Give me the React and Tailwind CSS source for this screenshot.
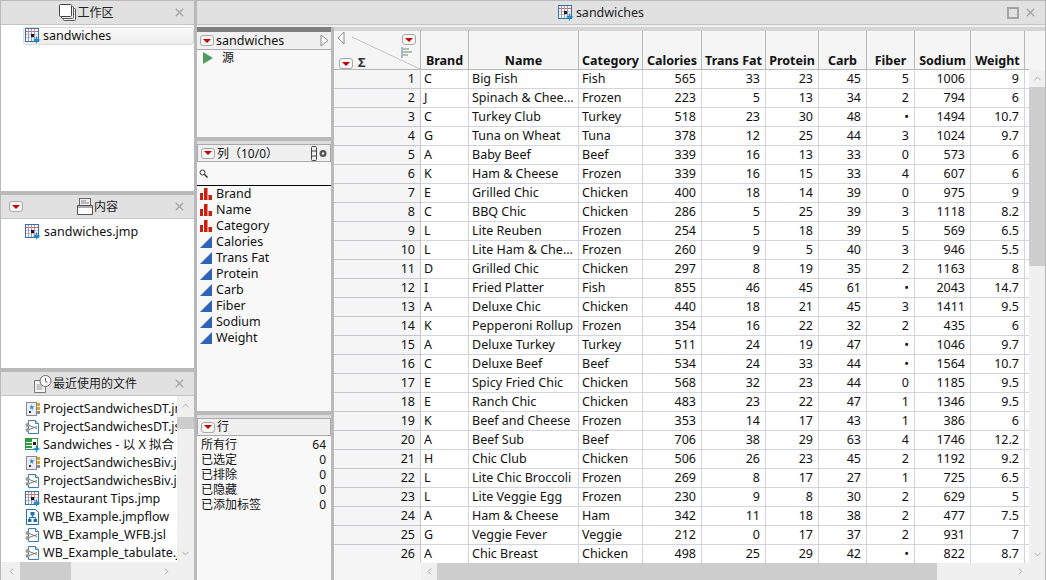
import { ChevronUp, ChevronDown, ChevronLeft, ChevronRight, X } from "lucide-react";

const columns = [
  { name: "Brand", width: 48 },
  { name: "Name", width: 110 },
  { name: "Category", width: 64 },
  { name: "Calories", width: 59 },
  { name: "Trans Fat", width: 64 },
  { name: "Protein", width: 53 },
  { name: "Carb", width: 48 },
  { name: "Fiber", width: 48 },
  { name: "Sodium", width: 56 },
  { name: "Weight", width: 54 },
];

const rows = [
  ["C", "Big Fish", "Fish", 565, 33, 23, 45, 5, 1006, 9],
  ["J", "Spinach & Chee...", "Frozen", 223, 5, 13, 34, 2, 794, 6],
  ["C", "Turkey Club", "Turkey", 518, 23, 30, 48, "•", 1494, 10.7],
  ["G", "Tuna on Wheat", "Tuna", 378, 12, 25, 44, 3, 1024, 9.7],
  ["A", "Baby Beef", "Beef", 339, 16, 13, 33, 0, 573, 6],
  ["K", "Ham & Cheese", "Frozen", 339, 16, 15, 33, 4, 607, 6],
  ["E", "Grilled Chic", "Chicken", 400, 18, 14, 39, 0, 975, 9],
  ["C", "BBQ Chic", "Chicken", 286, 5, 25, 39, 3, 1118, 8.2],
  ["L", "Lite Reuben", "Frozen", 254, 5, 18, 39, 5, 569, 6.5],
  ["L", "Lite Ham & Che...", "Frozen", 260, 9, 5, 40, 3, 946, 5.5],
  ["D", "Grilled Chic", "Chicken", 297, 8, 19, 35, 2, 1163, 8],
  ["I", "Fried Platter", "Fish", 855, 46, 45, 61, "•", 2043, 14.7],
  ["A", "Deluxe Chic", "Chicken", 440, 18, 21, 45, 3, 1411, 9.5],
  ["K", "Pepperoni Rollup", "Frozen", 354, 16, 22, 32, 2, 435, 6],
  ["A", "Deluxe Turkey", "Turkey", 511, 24, 19, 47, "•", 1046, 9.7],
  ["C", "Deluxe Beef", "Beef", 534, 24, 33, 44, "•", 1564, 10.7],
  ["E", "Spicy Fried Chic", "Chicken", 568, 32, 23, 44, 0, 1185, 9.5],
  ["E", "Ranch Chic", "Chicken", 483, 23, 22, 47, 1, 1346, 9.5],
  ["K", "Beef and Cheese", "Frozen", 353, 14, 17, 43, 1, 386, 6],
  ["A", "Beef Sub", "Beef", 706, 38, 29, 63, 4, 1746, 12.2],
  ["H", "Chic Club", "Chicken", 506, 26, 23, 45, 2, 1192, 9.2],
  ["L", "Lite Chic Broccoli", "Frozen", 269, 8, 17, 27, 1, 725, 6.5],
  ["L", "Lite Veggie Egg", "Frozen", 230, 9, 8, 30, 2, 629, 5],
  ["A", "Ham & Cheese", "Ham", 342, 11, 18, 38, 2, 477, 7.5],
  ["G", "Veggie Fever", "Veggie", 212, 0, 17, 37, 2, 931, 7],
  ["A", "Chic Breast", "Chicken", 498, 25, 29, 42, "•", 822, 8.7],
];

const recentFiles = [
  ["project", "ProjectSandwichesDT.jmpprj"],
  ["script", "ProjectSandwichesDT.jsl"],
  ["report", "Sandwiches - 以 X 拟合 Y"],
  ["project", "ProjectSandwichesBiv.jmpprj"],
  ["script", "ProjectSandwichesBiv.jsl"],
  ["table", "Restaurant Tips.jmp"],
  ["flow", "WB_Example.jmpflow"],
  ["script", "WB_Example_WFB.jsl"],
  ["script", "WB_Example_tabulate.jsl"],
];

const rowStates = [
  ["所有行", 64],
  ["已选定", 0],
  ["已排除", 0],
  ["已隐藏", 0],
  ["已添加标签", 0],
];

function Star() {
  return <path d="M11.500 7.500l1 3.500 3.500 1-3.500 1-1 3-1-3-3-1 3-1z" fill="#1688cc" />;
}

function TableIcon() {
  return (
    <svg width="16" height="16" viewBox="0 0 16 16" className="shrink-0">
      <rect x="0.500" y="0.500" width="13" height="13" fill="#fff" stroke="#2f74ae" />
      <path d="M1 3.500h12" stroke="#e2605c" />
      <path d="M1 6.500h12M1 9.500h12" stroke="#e6b4c0" />
      <path d="M3.500 1v12M6.500 1v12M9.500 1v12" stroke="#8f9ccb" />
      <rect x="6" y="6" width="3" height="3" fill="#1c1c1c" />
      <Star />
    </svg>
  );
}

function ScriptIcon() {
  return (
    <svg width="16" height="16" viewBox="0 0 16 16" className="shrink-0">
      <path d="M3.500 1.500h7l3 3v10h-10z" fill="#fff" stroke="#3a7db5" />
      <path d="M10.500 1.500v3h3" fill="#d4e6f5" stroke="#3a7db5" />
      <circle cx="2.500" cy="6" r="2" fill="#9a9a9a" />
      <circle cx="2.500" cy="11" r="2" fill="#9a9a9a" />
      <path d="M4 6.500l8 3M4 10.500l8-3" stroke="#777" />
    </svg>
  );
}

function ProjectIcon() {
  return (
    <svg width="16" height="16" viewBox="0 0 16 16" className="shrink-0">
      <rect x="1.500" y="1.500" width="10" height="13" fill="#ecebf7" stroke="#8a8a8a" />
      <rect x="12" y="2" width="3" height="3" fill="#e0a030" />
      <rect x="12" y="6" width="3" height="3" fill="#e0a030" />
      <rect x="12" y="10" width="3" height="3" fill="#8a8a8a" />
      <path d="M6.500 3l.7 2.300 2.300.3-1.800 1.100.3 2.300-1.500-1.600-1.800 1 1-2-1.300-1 2-.2z" fill="#1a8ac8" />
      <rect x="4" y="10" width="2" height="2" fill="#333" />
    </svg>
  );
}

function ReportIcon() {
  return (
    <svg width="16" height="16" viewBox="0 0 16 16" className="shrink-0">
      <rect x="0.500" y="1.500" width="12" height="11" fill="#fff" stroke="#2f9a3f" />
      <rect x="1" y="2" width="6" height="3" fill="#2f9a3f" />
      <rect x="1" y="6" width="6" height="2" fill="#2f9a3f" />
      <rect x="1" y="9" width="6" height="2" fill="#2f9a3f" />
      <rect x="8" y="5" width="3" height="3" fill="#222" />
      <Star />
    </svg>
  );
}

function FlowIcon() {
  return (
    <svg width="16" height="16" viewBox="0 0 16 16" className="shrink-0">
      <path d="M1.500 0.500h9l3 3v12h-12z" fill="#fff" stroke="#1f6fb0" />
      <rect x="5.500" y="3" width="4" height="3.500" fill="#1f6fb0" />
      <rect x="3" y="10" width="3.500" height="3" fill="#1f6fb0" />
      <rect x="8.500" y="10" width="3.500" height="3" fill="#1f6fb0" />
      <path d="M7.500 6.500v2M4.500 10V8.500h6V10" fill="none" stroke="#1f6fb0" />
    </svg>
  );
}

const fileIcons = {
  table: TableIcon,
  script: ScriptIcon,
  project: ProjectIcon,
  report: ReportIcon,
  flow: FlowIcon,
};

function StackIcon() {
  return (
    <svg width="17" height="17" viewBox="0 0 17 17" className="shrink-0">
      <rect x="4.500" y="4.500" width="12" height="12" rx="1" fill="#f4f4f4" stroke="#555" />
      <rect x="2.500" y="2.500" width="12" height="12" rx="1" fill="#f4f4f4" stroke="#555" />
      <rect x="0.500" y="0.500" width="12" height="12" rx="1" fill="#fff" stroke="#444" />
    </svg>
  );
}

function ContentsIcon() {
  return (
    <svg width="16" height="17" viewBox="0 0 16 17" className="shrink-0">
      <rect x="2.500" y="0.500" width="11" height="8" fill="#eee" stroke="#666" />
      <path d="M4 3h5M4 5h8" stroke="#888" />
      <path d="M0.500 7.500h15v9h-15z" fill="#fff" stroke="#555" />
      <rect x="1" y="8" width="14" height="2" fill="#aaa" />
    </svg>
  );
}

function RecentIcon() {
  return (
    <svg width="18" height="18" viewBox="0 0 18 18" className="shrink-0">
      <path d="M0.500 5.500h9l2 2v10h-11z" fill="#f4f4f4" stroke="#777" />
      <path d="M2.500 10h6M2.500 12h6M2.500 14h6" stroke="#999" />
      <circle cx="11.500" cy="6" r="5.500" fill="#fff" stroke="#666" />
      <path d="M11.500 3v3.200l2 1.200" fill="none" stroke="#555" />
    </svg>
  );
}

function MenuButton() {
  return (
    <span className="flex h-[11px] w-[14px] shrink-0 items-center justify-center rounded-[3px] border border-[#a8a8a8] bg-[#f6f6f6]">
      <svg width="8" height="4" viewBox="0 0 8 4">
        <path d="M0 0h8L4 4z" fill="#c00000" />
      </svg>
    </span>
  );
}

function NominalIcon() {
  return (
    <svg width="12" height="12" viewBox="0 0 12 12" className="shrink-0">
      <path d="M0 5h3v7H0zM4 0h3.500v12H4zM8.500 7H12v5H8.500z" fill="#c8200c" />
    </svg>
  );
}

function ContinuousIcon() {
  return (
    <svg width="12" height="12" viewBox="0 0 12 12" className="shrink-0">
      <path d="M12 0v12H0z" fill="#2e65b5" />
    </svg>
  );
}

function PanelHeader({ icon, title, menu, shift }) {
  return (
    <div className={`relative flex h-[24px] shrink-0 items-center justify-center gap-px border-b border-[#c4c4c4] bg-[#e1e1e1] text-[12px] text-[#222] ${shift}`}>
      {menu && (
        <span className="absolute left-[8px] top-[6px]">
          <MenuButton />
        </span>
      )}
      {icon}
      <span>{title}</span>
      <X size={13} strokeWidth={2.5} className="absolute right-[8px] top-[5px] text-[#a4a4a4]" />
    </div>
  );
}

function RecentList() {
  return (
    <div className="flex min-h-0 flex-1 flex-col bg-white">
      <div className="flex min-h-0 flex-1">
        <div className="min-w-0 flex-1 overflow-hidden pt-[4px]">
          {recentFiles.map(([kind, name]) => {
            const Icon = fileIcons[kind];
            return (
              <div key={name} className="flex h-[18px] items-center gap-[2px] whitespace-nowrap pl-[24px] text-[12.5px] leading-[18px] text-[#111]">
                <Icon />
                <span>{name}</span>
              </div>
            );
          })}
        </div>
        <div className="flex w-[17px] shrink-0 flex-col items-center bg-[#f0f0f0]">
          <ChevronUp size={11} className="mt-[4px] text-[#a6a6a6]" />
          <div className="mt-[6px] h-[12px] w-full bg-[#cdcdcd]" />
          <ChevronDown size={11} className="mt-auto mb-[3px] text-[#a6a6a6]" />
        </div>
      </div>
      <div className="flex h-[18px] shrink-0 items-center bg-[#f0f0f0]">
        <ChevronLeft size={11} className="ml-[5px] shrink-0 text-[#a6a6a6]" />
        <div className="ml-[3px] h-full w-[51px] bg-[#cdcdcd]" />
        <ChevronRight size={11} className="ml-auto mr-[22px] shrink-0 text-[#a6a6a6]" />
      </div>
    </div>
  );
}

function LeftColumn() {
  return (
    <div className="flex w-[193px] shrink-0 flex-col">
      <div className="flex h-[190px] shrink-0 flex-col bg-white">
        <PanelHeader icon={<StackIcon />} title="工作区" shift="pr-[22px]" />
        <div className="pl-[22px] pt-[2px]">
          <div className="flex h-[18px] items-center gap-[2px] rounded-[3px] border border-[#dcdcdc] bg-gradient-to-b from-[#fafafa] to-[#ededed] pl-px text-[12.5px] leading-[16px] text-[#111]">
            <TableIcon />
            <span>sandwiches</span>
          </div>
        </div>
      </div>
      <div className="h-[4px] shrink-0 bg-[#b9b9b9]" />
      <div className="flex h-[173px] shrink-0 flex-col bg-white">
        <PanelHeader icon={<ContentsIcon />} title="内容" menu shift="" />
        <div className="mt-[4px] flex h-[18px] items-center gap-[3px] pl-[24px] text-[12.5px] leading-[18px] text-[#111]">
          <TableIcon />
          <span>sandwiches.jmp</span>
        </div>
      </div>
      <div className="h-[4px] shrink-0 bg-[#b9b9b9]" />
      <div className="flex min-h-0 flex-1 flex-col">
        <PanelHeader icon={<RecentIcon />} title="最近使用的文件" shift="pr-[24px]" />
        <RecentList />
      </div>
    </div>
  );
}

function SidePanels() {
  return (
    <div className="flex w-[134px] shrink-0 flex-col bg-[#f8f8f8] text-[12.5px] text-[#111]">
      <div className="h-[5px] shrink-0 bg-[#7f7f7f]" />
      <div className="flex h-[105px] shrink-0 flex-col">
        <div className="flex h-[18px] shrink-0 items-center gap-[2px] border-b border-[#aaa] bg-[#f0f0f0] pl-[3px] leading-[17px]">
          <MenuButton />
          <span>sandwiches</span>
          <svg width="9" height="13" viewBox="0 0 9 13" className="ml-auto mr-[2px]">
            <path d="M1 1l7 5.500-7 5.500z" fill="#fff" stroke="#888" />
          </svg>
        </div>
        <div className="flex h-[16px] items-center gap-[9px] pl-[6px] text-[12px] leading-[16px]">
          <svg width="10" height="12" viewBox="0 0 10 12">
            <path d="M0 0l10 6-10 6z" fill="#4f9a5f" />
          </svg>
          <span>源</span>
        </div>
      </div>
      <div className="h-[7px] shrink-0 border-t-[4px] border-[#b9b9b9] bg-[#dedede]" />
      <div className="flex h-[18px] shrink-0 items-center gap-[2px] border border-[#aaa] bg-[#f0f0f0] pl-[3px] text-[12px] leading-[16px]">
        <MenuButton />
        <span className="pt-px">列（10/0）</span>
        <svg width="18" height="15" viewBox="0 0 18 15" className="ml-auto mr-px">
          <rect x="0.500" y="0.500" width="5" height="14" rx="1" fill="#eee" stroke="#444" />
          <path d="M1 5h4M1 10h4" stroke="#444" />
          <circle cx="12" cy="7.500" r="3.500" fill="#555" />
          <circle cx="12" cy="7.500" r="1.200" fill="#eee" />
        </svg>
      </div>
      <div className="flex h-[24px] shrink-0 items-center border-b border-black pl-[2px]">
        <svg width="9" height="9" viewBox="0 0 9 9">
          <circle cx="3.500" cy="3.500" r="2.500" fill="none" stroke="#333" />
          <path d="M5.500 5.500L8.500 8.500" stroke="#333" strokeWidth="1.500" />
        </svg>
      </div>
      <div className="flex h-[225px] shrink-0 flex-col pl-[3px]">
        {columns.map((col, i) => (
          <div key={col.name} className="flex h-[16px] items-center gap-[4px] leading-[16px]">
            {i < 3 ? <NominalIcon /> : <ContinuousIcon />}
            <span>{col.name}</span>
          </div>
        ))}
      </div>
      <div className="h-[7px] shrink-0 border-t-[4px] border-[#b9b9b9] bg-[#dedede]" />
      <div className="flex h-[18px] shrink-0 items-center gap-[2px] border border-[#aaa] bg-[#f0f0f0] pl-[3px] text-[12px] leading-[16px]">
        <MenuButton />
        <span>行</span>
      </div>
      <div className="pl-[4px] pr-[5px] pt-px text-[12px]">
        {rowStates.map(([label, count]) => (
          <div key={label} className="flex h-[15px] items-center justify-between leading-[15px]">
            <span>{label}</span>
            <span>{count}</span>
          </div>
        ))}
      </div>
    </div>
  );
}

function CornerCell() {
  return (
    <div className="relative h-[39px] w-[87px] shrink-0 border-r border-b border-[#b8b8b8] bg-[#f5f5f5]">
      <svg width="87" height="39" viewBox="0 0 87 39" className="absolute -left-px -top-px">
        <line x1="19" y1="7" x2="87" y2="39" stroke="#c4c4c4" />
        <path d="M11 2L5 8l6 6z" fill="#fff" stroke="#888" />
        <path d="M69 17v11" stroke="#8fa5b8" strokeWidth="1.500" />
        <path d="M70 19h6M70 22h9M70 25h5" stroke="#9ab09a" strokeWidth="1.500" />
      </svg>
      <span className="absolute left-[68px] top-[3px]">
        <MenuButton />
      </span>
      <span className="absolute left-[5px] top-[27px]">
        <MenuButton />
      </span>
      <span className="absolute left-[24px] top-[23px] text-[13px] leading-[16px] font-bold text-[#333]">Σ</span>
    </div>
  );
}

function DataGrid() {
  return (
    <div className="flex min-w-0 flex-1 flex-col bg-white">
      <div className="h-[4px] shrink-0 bg-[#d4d4d4]" />
      <div className="flex min-h-0 flex-1">
        <div className="min-w-0 flex-1 overflow-hidden">
          <div className="flex h-[39px] bg-[#f5f5f5]">
            <CornerCell />
            {columns.map((col) => (
              <div
                key={col.name}
                style={{ width: col.width }}
                className="flex shrink-0 items-end justify-center border-r border-b border-[#b8b8b8] text-[12.5px] leading-[17px] font-bold text-[#111]"
              >
                {col.name}
              </div>
            ))}
            <div className="flex-1 border-b border-[#b8b8b8]" />
          </div>
          {rows.map((row, i) => (
            <div key={i} className="flex h-[19px] text-[12.5px] leading-[18px] text-[#111]">
              <div className="flex w-[87px] shrink-0 items-center justify-end border-r border-b border-[#c6c6d2] bg-[#f5f5f5] pr-[5px]">
                {i + 1}
              </div>
              {row.map((value, c) => (
                <div
                  key={c}
                  style={{ width: columns[c].width }}
                  className={
                    c < 3
                      ? "flex shrink-0 items-center overflow-hidden whitespace-nowrap border-r border-b border-[#d4d4e0] pl-[3px]"
                      : "flex shrink-0 items-center justify-end border-r border-b border-[#d4d4e0] pr-[5px]"
                  }
                >
                  {value}
                </div>
              ))}
              <div className="flex-1 border-b border-[#d4d4e0]" />
            </div>
          ))}
        </div>
        <div className="flex w-[16px] shrink-0 flex-col items-center bg-[#f0f0f0]">
          <div className="h-[39px] w-full shrink-0 bg-[#f5f5f5]" />
          <ChevronUp size={11} className="mt-[3px] shrink-0 text-[#a6a6a6]" />
          <div className="mt-[3px] h-[179px] w-full shrink-0 bg-[#cdcdcd]" />
          <ChevronDown size={11} className="mt-auto mb-[3px] shrink-0 text-[#a6a6a6]" />
        </div>
      </div>
      <div className="flex h-[17px] shrink-0 items-center bg-[#f0f0f0]">
        <div className="h-full w-[87px] shrink-0 bg-[#f5f5f5]" />
        <ChevronLeft size={11} className="ml-[3px] shrink-0 text-[#a6a6a6]" />
        <div className="ml-[2px] h-full w-[500px] bg-[#cdcdcd]" />
        <ChevronRight size={11} className="ml-auto mr-[19px] shrink-0 text-[#a6a6a6]" />
      </div>
    </div>
  );
}

export default function App() {
  return (
    <div
      className="flex h-[580px] w-[1046px] overflow-hidden bg-[#b9b9b9] pl-px pr-px pt-px"
      style={{ fontFamily: '"Noto Sans", "Noto Sans CJK SC", sans-serif' }}
    >
      <LeftColumn />
      <div className="ml-[3px] flex min-w-0 flex-1 flex-col">
        <div className="relative flex h-[24px] shrink-0 items-center justify-center gap-[2px] border-b border-[#c4c4c4] bg-[#e1e1e1] pr-[40px] text-[12.5px] leading-[16px] text-[#222]">
          <TableIcon />
          <span>sandwiches</span>
          <span className="absolute right-[26px] top-[6px] h-[12px] w-[12px] border-2 border-[#a4a4a4]" />
          <X size={13} strokeWidth={2.5} className="absolute right-[8px] top-[5px] text-[#a4a4a4]" />
        </div>
        <div className="h-[2px] shrink-0 bg-[#efefef]" />
        <div className="flex min-h-0 flex-1">
          <SidePanels />
          <div className="w-[3px] shrink-0 bg-[#b9b9b9]" />
          <DataGrid />
        </div>
      </div>
    </div>
  );
}
